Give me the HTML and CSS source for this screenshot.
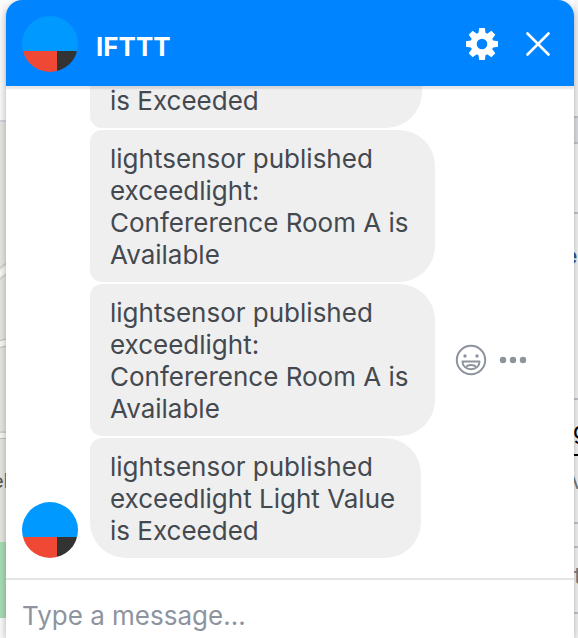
FILE: index.html
```html
<!DOCTYPE html>
<html lang="en">
<head>
<meta charset="utf-8">
<title>IFTTT</title>
<link rel="stylesheet" href="styles.css">
</head>
<body>
<div class="page">
  <div class="map" aria-hidden="true">
    <svg viewBox="0 0 6 638" preserveAspectRatio="xMinYMin slice">
      <rect width="6" height="638" fill="#fbfbfb"/>
      <rect y="120" width="6" height="498" fill="#e9e7e2"/>
      <rect y="120" width="6" height="2" fill="#d5d6de"/>
      <path d="M-2 269 L8 262 M-2 281 L8 273" stroke="#c5c4c0" stroke-width="1"/>
      <path d="M-2 275 L8 268" stroke="#fafafa" stroke-width="5"/>
      <path d="M-2 344.500 L8 342" stroke="#fafafa" stroke-width="5"/>
      <path d="M-2 341 L8 338.500 M-2 348 L8 346" stroke="#c5c4c0" stroke-width="1"/>
      <rect y="433" width="6" height="5" fill="#f8f8f7"/>
      <path d="M0 432 H6 M0 438.500 H6" stroke="#c5c4c0" stroke-width="1"/>
      <rect y="542" width="6" height="76" fill="#a8dfb3"/>
      <text x="-8" y="488" class="map-label">el</text>
    </svg>
  </div>

  <main class="chat">
    <header class="chat-header">
      <svg class="avatar" viewBox="0 0 56 56" aria-hidden="true">
        <defs><clipPath id="disc"><circle cx="28" cy="28" r="28"/></clipPath></defs>
        <g clip-path="url(#disc)">
          <rect width="56" height="35" fill="#0099ff"/>
          <rect y="35" width="35" height="21" fill="#ef4935"/>
          <rect x="35" y="35" width="21" height="21" fill="#333333"/>
        </g>
      </svg>
      <h1 class="title">IFTTT</h1>
      <button class="icon-button" type="button" aria-label="Settings">
        <svg width="32" height="32" viewBox="-16 -16 32 32">
          <g fill="#fff">
            <path id="tooth" d="M-4 -8 L-2.800 -16 H2.800 L4 -8 V8 L2.800 16 H-2.800 L-4 8 Z"/>
            <use href="#tooth" transform="rotate(45)"/>
            <use href="#tooth" transform="rotate(90)"/>
            <use href="#tooth" transform="rotate(135)"/>
            <circle r="11.500"/>
          </g>
          <circle r="5.300" fill="#0084ff"/>
        </svg>
      </button>
      <button class="icon-button" type="button" aria-label="Close">
        <svg width="24" height="24" viewBox="0 0 24 24" fill="none" stroke="#fff" stroke-width="2.600" stroke-linecap="round"><path d="M1.500 1.500 L22.500 22.500 M22.500 1.500 L1.500 22.500"/></svg>
      </button>
    </header>

    <section class="messages" aria-label="Messages">
      <div class="row"><p class="bubble bubble-continued">is Exceeded</p></div>
      <div class="row"><p class="bubble">lightsensor published<br>exceedlight:<br>Confererence Room A is<br>Available</p></div>
      <div class="row">
        <p class="bubble">lightsensor published<br>exceedlight:<br>Confererence Room A is<br>Available</p>
        <div class="actions">
          <button class="icon-button" type="button" aria-label="React">
            <svg width="32" height="32" viewBox="0 0 32 32" fill="none" stroke="#8d949e" stroke-width="2">
              <circle cx="16" cy="16" r="14.200"/>
              <circle cx="10" cy="12" r="1.700" fill="#8d949e" stroke="none"/>
              <circle cx="22" cy="12" r="1.700" fill="#8d949e" stroke="none"/>
              <path d="M7.500 17.500 H24.500 C24.500 22.200 21 25.200 16 25.200 S7.500 22.200 7.500 17.500 Z" stroke-linejoin="round"/>
              <path d="M10.700 23.500 C12.500 20.300 19.500 20.300 21.300 23.500"/>
            </svg>
          </button>
          <button class="icon-button" type="button" aria-label="More">
            <svg width="28" height="8" viewBox="0 0 28 8" fill="#8d949e"><circle cx="4" cy="4" r="3.200"/><circle cx="14" cy="4" r="3.200"/><circle cx="24" cy="4" r="3.200"/></svg>
          </button>
        </div>
      </div>
      <div class="row">
        <svg class="avatar" viewBox="0 0 56 56" aria-hidden="true">
          <g clip-path="url(#disc)">
            <rect width="56" height="35" fill="#0099ff"/>
            <rect y="35" width="35" height="21" fill="#ef4935"/>
            <rect x="35" y="35" width="21" height="21" fill="#333333"/>
          </g>
        </svg>
        <p class="bubble bubble-last">lightsensor published<br>exceedlight Light Value<br>is Exceeded</p>
      </div>
    </section>

    <form class="composer">
      <input class="composer-input" type="text" placeholder="Type a message..." aria-label="Type a message">
    </form>
  </main>

  <div class="side" aria-hidden="true">
    <svg viewBox="0 0 4 638" preserveAspectRatio="xMinYMin slice">
      <rect width="4" height="638" fill="#f6f6f6"/>
      <rect y="116" width="4" height="28" fill="#dfe1e6"/>
      <path d="M0 117 H4 M0 143 H4 M0 213 H4 M0 399 H4 M0 523 H4 M0 547 H4 M0 613 H4" stroke="#c6c7ca" stroke-width="2"/>
      <text x="-11" y="264" class="side-text link">e</text>
      <text x="-1" y="439" class="side-text title-text">g</text>
      <path d="M0 455 H4" stroke="#000" stroke-width="2"/>
      <text x="-3" y="489" class="side-text muted">v</text>
      <text x="0" y="584" class="side-text muted">t</text>
    </svg>
  </div>
</div>
</body>
</html>
```
FILE: styles.css
```css
* {
  box-sizing: border-box;
}

body {
  margin: 0;
  background: #fff;
  color: #444950;
  font-family: Inter, "Liberation Sans", sans-serif;
  font-size: 26px;
  line-height: 32px;
}

.page {
  display: grid;
  grid-template-columns: 6px 1fr 4px;
  height: 100vh;
  overflow: hidden;
}

.map,
.side {
  min-height: 0;
  overflow: hidden;
}

.map svg,
.side svg {
  display: block;
  width: 100%;
  height: 100%;
}

.map-label {
  font-size: 20px;
  fill: #555;
}

.side-text {
  font-size: 24px;
}

.link {
  fill: #385898;
  font-weight: 700;
}

.title-text {
  fill: #000;
}

.muted {
  fill: #777c84;
}

.chat {
  position: relative;
  display: flex;
  flex-direction: column;
  min-width: 0;
  min-height: 0;
  background: #fff;
  border-radius: 16px 16px 0 0;
  box-shadow: 0 2px 8px rgba(0, 0, 0, 0.3);
}

.chat-header {
  position: relative;
  z-index: 1;
  display: flex;
  flex: none;
  align-items: center;
  gap: 18px;
  padding: 16px 24px 14px 16px;
  background: #0084ff;
  border-radius: 16px 16px 0 0;
  box-shadow: 0 3px 2px rgba(0, 0, 0, 0.1);
}

.avatar {
  flex: none;
  width: 56px;
  height: 56px;
}

.title {
  flex: 1;
  margin: 6px 0 0;
  color: #fff;
  font-size: 26px;
  font-weight: 700;
  line-height: 32px;
}

.icon-button {
  display: flex;
  padding: 0;
  border: 0;
  background: none;
  cursor: pointer;
}

.chat-header .icon-button + .icon-button {
  margin-left: 10px;
}

.messages {
  display: flex;
  flex: 1;
  flex-direction: column;
  justify-content: flex-end;
  gap: 2px;
  min-height: 0;
  padding: 0 16px 20px;
  overflow: hidden;
}

.row {
  display: grid;
  flex: none;
  grid-template-columns: 56px max-content 1fr;
  column-gap: 12px;
  align-items: end;
}

.bubble {
  grid-column: 2;
  margin: 0;
  padding: 13px 26px 11px 20px;
  background: #efefef;
  border-radius: 12px 36px 36px 12px;
}

.bubble-continued {
  min-width: 332px;
  border-top-left-radius: 0;
  border-top-right-radius: 0;
}

.bubble-last {
  border-bottom-left-radius: 36px;
}

.actions {
  display: flex;
  align-items: center;
  align-self: center;
  gap: 12px;
  padding-left: 8px;
}

.composer {
  flex: none;
  height: 60px;
  padding: 20px 16px 0;
  border-top: 2px solid #e3e4e6;
}

.composer-input {
  display: block;
  width: 100%;
  height: 32px;
  padding: 0;
  border: 0;
  outline: 0;
  background: none;
  color: #444950;
  font: inherit;
}

.composer-input::placeholder {
  color: #8d949e;
  opacity: 1;
}
```
